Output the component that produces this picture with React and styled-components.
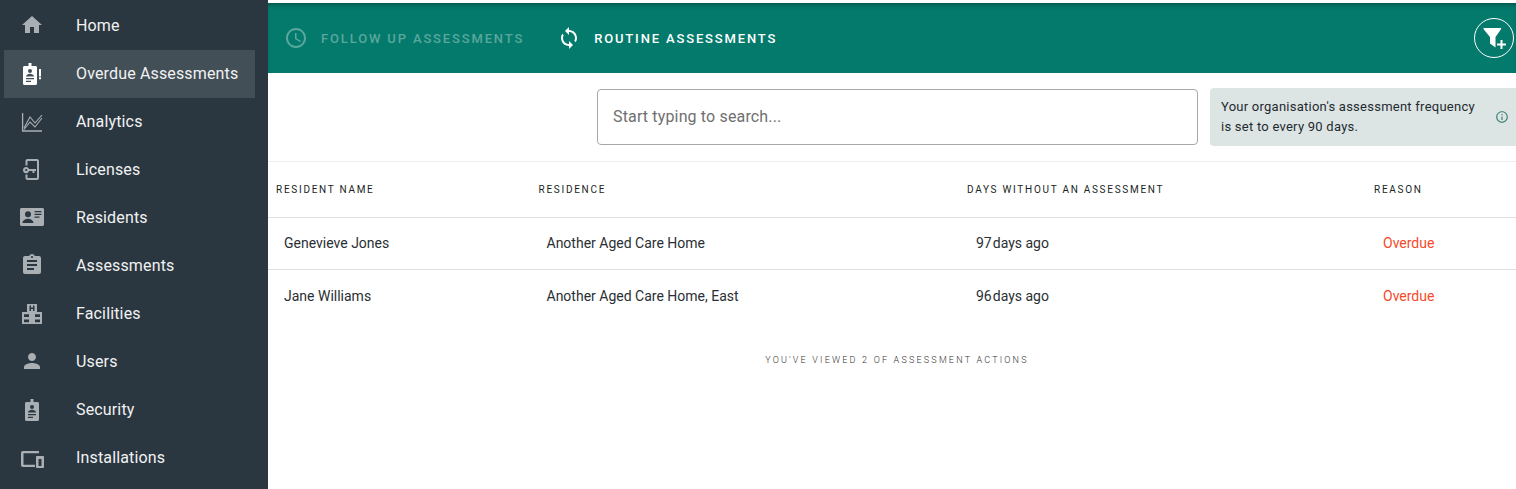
import React from 'react'
import styled, { createGlobalStyle } from 'styled-components'
import { MdHome, MdAssignment, MdPerson, MdAccessTime, MdSync, MdInfoOutline } from 'react-icons/md'

const GlobalStyle = createGlobalStyle`
    html, body {
        margin: 0;
        padding: 0;
        height: 100%;
        background: #fff;
        font-family: Roboto, "Liberation Sans", sans-serif;
    }
    #root {
        height: 100%;
    }
`

const OverdueIcon = () => (
    <svg viewBox="0 0 24 24" fill="#fff">
        <path fillRule="evenodd" d="M4.500 5H8.500V2h3v3h4c.8 0 1.500.7 1.500 1.500V22.500c0 .8-.7 1.500-1.500 1.500h-11C3.700 24 3 23.300 3 22.500V6.500C3 5.700 3.700 5 4.500 5zM10 8a2 2 0 1 0 0 4 2 2 0 0 0 0-4zM6 15.500h8c0-1.800-2.500-2.800-4-2.800s-4 1-4 2.800zm0 1.500v1.200h8V17zm0 2.700v1.200h5v-1.200z" />
        <path d="M19 8h2v7.500h-2z M19 16.300h2v2h-2z" />
    </svg>
)

const AnalyticsIcon = () => (
    <svg viewBox="0 0 24 24" fill="none" stroke="#a9afb3" strokeWidth="1.100">
        <path d="M2.600 4v18H22" strokeWidth="1.300" />
        <path d="M4 19l6-11 5 6 7-8" />
        <path d="M4 20.500l6-7.500 5 5 7-9" />
    </svg>
)

const LicenseIcon = () => (
    <svg viewBox="0 0 24 24" fill="#a9afb3">
        <path d="M7.500 2H17c1.100 0 2 .9 2 2v17c0 1.100-.9 2-2 2H7.500c-1.100 0-2-.9-2-2v-3.500h2V21H17V4H7.500v4.500h-2V4c0-1.100.9-2 2-2z" />
        <path fillRule="evenodd" d="M6.200 10a3.100 3.100 0 0 1 2.900 2H16v2h-1.500v2h-2v-2H9.100a3.100 3.100 0 1 1-2.900-4zm0 1.900a1.100 1.100 0 1 0 0 2.200 1.100 1.100 0 0 0 0-2.200z" />
    </svg>
)

const ResidentIcon = () => (
    <svg viewBox="0 0 24 18" fill="#a9afb3">
        <path fillRule="evenodd" d="M1.500 0h21c.8 0 1.500.7 1.500 1.500v15c0 .8-.7 1.500-1.500 1.500h-21C.7 18 0 17.300 0 16.500v-15C0 .7.700 0 1.500 0zM8 3.200a3 3 0 1 0 0 6 3 3 0 0 0 0-6zM2.500 15h11c0-2.800-3.600-4.200-5.500-4.200S2.500 12.200 2.500 15zM14.500 3v1.200h7V3zm0 2.800V7h7V5.800zm0 2.800v1.200h5V8.600z" />
    </svg>
)

const FacilityIcon = () => (
    <svg viewBox="0 0 24 24" fill="#a9afb3">
        <path fillRule="evenodd" d="M7 3h10v8h5v12H2V11h5zM9.500 4.500V10H11V8h2v2h1.500V4.500H13v2h-2v-2zM4 13.200v2.800h5v-2.800zm11 0v2.800h5v-2.800zM4 18.400v2.800h5v-2.800zm11 0v2.800h5v-2.800z" />
    </svg>
)

const SecurityIcon = () => (
    <svg viewBox="0 0 24 24" fill="#a9afb3">
        <path fillRule="evenodd" d="M6.500 5h4V2h3v3h4c.8 0 1.500.7 1.500 1.500V22.500c0 .8-.7 1.500-1.500 1.500h-11C5.700 24 5 23.300 5 22.500V6.500C5 5.700 5.700 5 6.500 5zM12 8a2 2 0 1 0 0 4 2 2 0 0 0 0-4zM8 15.500h8c0-1.800-2.500-2.800-4-2.800s-4 1-4 2.800zm0 1.500v1.200h8V17zm0 2.700v1.200h5v-1.200z" />
    </svg>
)

const DevicesIcon = () => (
    <svg viewBox="0 0 24 24" fill="#a9afb3">
        <path d="M3 6h16v2.200H3.500v11.600H15V22H3c-1.100 0-2-.9-2-2V8c0-1.100.9-2 2-2z" />
        <path fillRule="evenodd" d="M17 11h6c.6 0 1 .4 1 1v10c0 .6-.4 1-1 1h-6c-.6 0-1-.4-1-1V12c0-.6.4-1 1-1zm1.500 3v7h3v-7z" />
    </svg>
)

const FilterPlusIcon = () => (
    <svg viewBox="0 0 24 24" fill="#fff">
        <path d="M1 2h16.500c.6 0 .9.700.5 1.200L12.500 11v10.500L7 17.500V11L.6 3.200C.2 2.700.5 2 1 2z" />
        <path d="M17.500 14h2v3.500H23v2h-3.500V23h-2v-3.500H14v-2h3.500z" />
    </svg>
)

const navItems = [
    { label: 'Home', icon: <MdHome /> },
    { label: 'Overdue Assessments', icon: <OverdueIcon />, active: true },
    { label: 'Analytics', icon: <AnalyticsIcon /> },
    { label: 'Licenses', icon: <LicenseIcon /> },
    { label: 'Residents', icon: <ResidentIcon /> },
    { label: 'Assessments', icon: <MdAssignment /> },
    { label: 'Facilities', icon: <FacilityIcon /> },
    { label: 'Users', icon: <MdPerson /> },
    { label: 'Security', icon: <SecurityIcon /> },
    { label: 'Installations', icon: <DevicesIcon /> },
]

const rows = [
    { name: 'Genevieve Jones', residence: 'Another Aged Care Home', days: 97 },
    { name: 'Jane Williams', residence: 'Another Aged Care Home, East', days: 96 },
]

const App = () => {
    return (
        <>
            <GlobalStyle />
            <Page>
                <Sidebar>
                    {navItems.map((item) => (
                        <NavItem key={item.label} $active={item.active}>
                            <NavIcon>{item.icon}</NavIcon>
                            <NavLabel>{item.label}</NavLabel>
                        </NavItem>
                    ))}
                </Sidebar>
                <Main>
                    <TopBar>
                        <Tab>
                            <TabIcon><MdAccessTime /></TabIcon>
                            FOLLOW UP ASSESSMENTS
                        </Tab>
                        <Tab $active>
                            <TabIcon><MdSync /></TabIcon>
                            ROUTINE ASSESSMENTS
                        </Tab>
                        <FilterButton><FilterPlusIcon /></FilterButton>
                    </TopBar>
                    <SearchRow>
                        <SearchBox>Start typing to search...</SearchBox>
                        <Notice>
                            <span>Your organisation's assessment frequency<br />is set to every 90 days.</span>
                            <NoticeIcon><MdInfoOutline /></NoticeIcon>
                        </Notice>
                    </SearchRow>
                    <HeadRow>
                        <HeadCell>RESIDENT NAME</HeadCell>
                        <HeadCell>RESIDENCE</HeadCell>
                        <HeadCell>DAYS WITHOUT AN ASSESSMENT</HeadCell>
                        <HeadCell>REASON</HeadCell>
                    </HeadRow>
                    <TableBody>
                        {rows.map((row) => (
                            <Row key={row.name}>
                                <Cell>{row.name}</Cell>
                                <Cell>{row.residence}</Cell>
                                <DaysCell><b>{row.days}</b>days ago</DaysCell>
                                <ReasonCell>Overdue</ReasonCell>
                            </Row>
                        ))}
                    </TableBody>
                    <Footer>YOU'VE VIEWED 2 OF ASSESSMENT ACTIONS</Footer>
                </Main>
            </Page>
        </>
    )
}

export default App

const Page = styled.div`
    display: flex;
    height: 489px;
    overflow: hidden;
`
const Sidebar = styled.nav`
    width: 268px;
    flex-shrink: 0;
    background: #2b3740;
    padding: 2px 13px 0 4px;
    box-sizing: border-box;
`
const NavItem = styled.div`
    display: flex;
    align-items: center;
    height: 48px;
    padding: 0 0 2px 16px;
    box-sizing: border-box;
    background: ${(p) => (p.$active ? '#434f57' : 'transparent')};
`
const NavIcon = styled.span`
    display: flex;
    align-items: center;
    justify-content: center;
    width: 24px;
    height: 24px;
    font-size: 24px;
    color: #a9afb3;
    svg {
        width: 24px;
        height: 24px;
    }
`
const NavLabel = styled.span`
    margin-left: 32px;
    font-size: 16px;
    letter-spacing: 0.15px;
    color: #f1f2f3;
`
const Main = styled.main`
    flex: 1;
    min-width: 0;
    padding-top: 3px;
`
const TopBar = styled.header`
    position: relative;
    display: flex;
    align-items: center;
    height: 70px;
    background: #047a6c;
    box-shadow: inset 0 4px 4px -2px rgba(0, 0, 0, 0.3);
    padding: 0 0 0 16px;
    box-sizing: border-box;
`
const Tab = styled.div`
    display: flex;
    align-items: center;
    margin-right: 33px;
    font-size: 13px;
    font-weight: 500;
    letter-spacing: 1.85px;
    color: ${(p) => (p.$active ? '#fff' : '#5aa79d')};
`
const TabIcon = styled.span`
    display: flex;
    font-size: 24px;
    margin-right: 13px;
`
const FilterButton = styled.div`
    display: flex;
    align-items: center;
    justify-content: center;
    width: 40px;
    height: 40px;
    margin-left: auto;
    margin-right: 2px;
    border: 1px solid #fff;
    border-radius: 50%;
    box-sizing: border-box;
    svg {
        width: 24px;
        height: 24px;
        margin-left: 2px;
    }
`
const SearchRow = styled.div`
    display: flex;
    align-items: center;
    height: 88px;
    padding-left: 329px;
    border-bottom: 1px solid #eeeeee;
`
const SearchBox = styled.div`
    display: flex;
    align-items: center;
    width: 601px;
    height: 56px;
    padding: 0 0 2px 15px;
    box-sizing: border-box;
    border: 1px solid #a8a8a8;
    border-radius: 4px;
    font-size: 16px;
    letter-spacing: 0.15px;
    color: #6f6f6f;
`
const Notice = styled.div`
    display: flex;
    align-items: center;
    justify-content: space-between;
    width: 306px;
    height: 58px;
    margin-left: 12px;
    padding: 0 7px 0 11px;
    box-sizing: border-box;
    background: #dce5e3;
    border-radius: 4px 0 0 4px;
    font-size: 13px;
    line-height: 20px;
    letter-spacing: 0.25px;
    color: #1f2a30;
`
const NoticeIcon = styled.span`
    display: flex;
    font-size: 14px;
    color: #3f7f75;
`
const tableColumns = '262.5px 428.5px 407px 1fr'
const HeadRow = styled.div`
    display: grid;
    grid-template-columns: ${tableColumns};
    align-items: center;
    height: 55px;
    border-bottom: 1px solid #e0e0e0;
`
const HeadCell = styled.div`
    padding-left: 8px;
    font-size: 10px;
    font-weight: 400;
    letter-spacing: 1.72px;
    color: #1a1f23;
`
const TableBody = styled.div`
    display: flex;
    flex-direction: column;
    & > :last-child {
        height: 53px;
        border-bottom: none;
    }
`
const Row = styled.div`
    display: grid;
    grid-template-columns: ${tableColumns};
    align-items: center;
    height: 51px;
    border-bottom: 1px solid #e0e0e0;
`
const Cell = styled.div`
    padding: 0 0 2px 16px;
    font-size: 14px;
    color: #2a2f33;
`
const DaysCell = styled(Cell)`
    padding-left: 17px;
    b {
        font-weight: 400;
        margin-right: 1px;
    }
`
const ReasonCell = styled(Cell)`
    padding-left: 17px;
    color: #f4492b;
`
const Footer = styled.div`
    margin-top: 32px;
    padding-left: 10px;
    text-align: center;
    font-size: 9px;
    font-weight: 300;
    letter-spacing: 2.2px;
    color: #333;
`
